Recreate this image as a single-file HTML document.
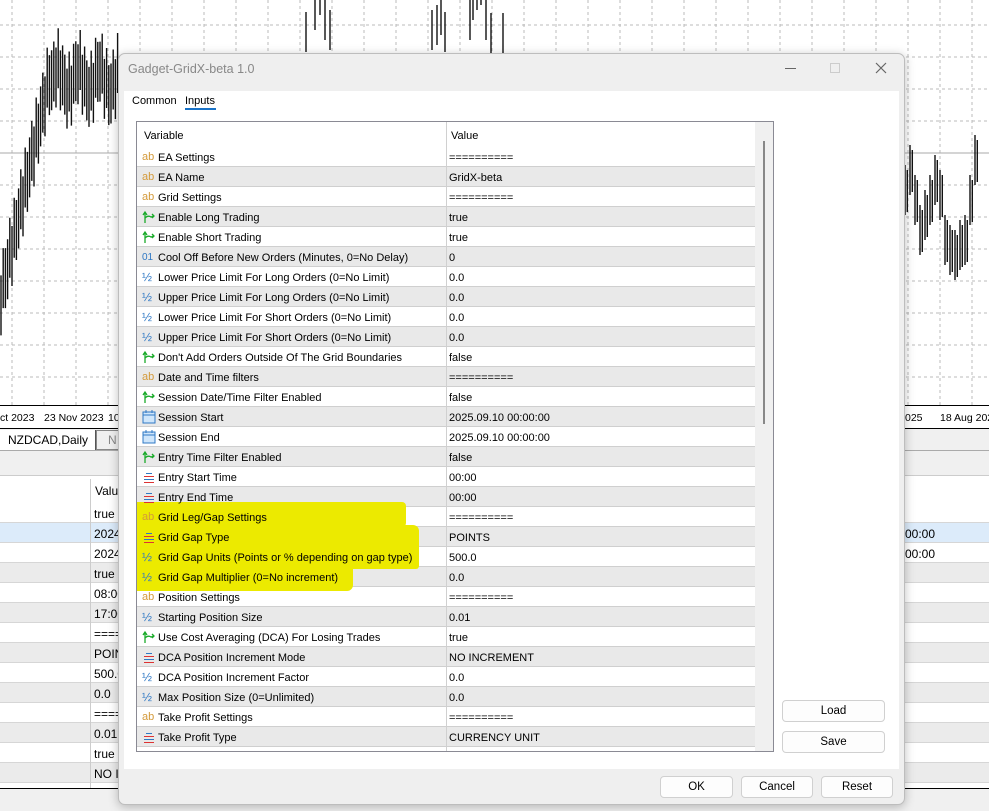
<!DOCTYPE html>
<html><head><meta charset="utf-8">
<style>
*{margin:0;padding:0;box-sizing:border-box}
body{width:989px;height:811px;overflow:hidden;position:relative;background:#fff;font-family:"Liberation Sans",Tahoma,sans-serif;font-size:11px;color:#000}
.a{position:absolute}
.t{position:absolute;white-space:nowrap;line-height:20px}
.btn{position:absolute;background:#fdfdfd;border:1px solid #d0d0d0;border-radius:4px;text-align:center;line-height:21px;font-size:11.5px}
.ic{position:absolute;width:14px;height:20px;font-size:11px;line-height:21px}
</style></head><body>
<svg class="a" style="left:0;top:0" width="989" height="811" id="ch"></svg>
<div class="a" style="left:0;top:405px;width:989px;height:1px;background:#000"></div>
<div class="t" style="left:0;top:408px;font-size:10.5px">ct 2023</div>
<div class="t" style="left:44px;top:408px;font-size:10.5px">23 Nov 2023</div>
<div class="t" style="left:108px;top:408px;font-size:10.5px">10</div>
<div class="t" style="left:905px;top:408px;font-size:10.5px">025</div>
<div class="t" style="left:940px;top:408px;font-size:10.5px">18 Aug 2025</div>
<div class="a" style="left:0;top:428px;width:989px;height:22px;background:#f0f0f0;border-top:1px solid #000"></div>
<div class="a" style="left:-2px;top:430px;width:98px;height:21px;background:#fff;border:1px solid #555;border-top:none"></div>
<div class="t" style="left:8px;top:430px;font-size:12px">NZDCAD,Daily</div>
<div class="a" style="left:96px;top:430px;width:30px;height:20px;background:#f0f0f0;border:1px solid #888"></div>
<div class="t" style="left:108px;top:430px;font-size:12px;color:#888">N</div>
<div class="a" style="left:0;top:450px;width:989px;height:26px;background:#f0f0f0;border-top:1px solid #aaa;border-bottom:1px solid #ccc"></div>
<div id="bg"></div>
<div class="a" style="left:0;top:788px;width:989px;height:1px;background:#000"></div>
<div class="a" style="left:0;top:789px;width:989px;height:22px;background:#f0f0f0"></div>
<div class="a" style="left:118px;top:53px;width:787px;height:752px;background:#efefef;border:1px solid #bdbdbd;border-radius:7px;box-shadow:0 2px 10px rgba(0,0,0,.25)"></div>
<div class="t" style="left:128px;top:59px;font-size:12.5px;color:#888">Gadget-GridX-beta 1.0</div>
<div class="a" style="left:785px;top:68px;width:11px;height:1px;background:#666"></div>
<div class="a" style="left:830px;top:63px;width:10px;height:10px;border:1px solid #ccc"></div>
<svg class="a" style="left:875px;top:62px" width="12" height="12"><path d="M1 1L11 11M11 1L1 11" stroke="#666" stroke-width="1.2"/></svg>
<div class="a" style="left:124px;top:91px;width:775px;height:678px;background:#fff"></div>
<div class="t" style="left:132px;top:91px">Common</div>
<div class="t" style="left:185px;top:91px">Inputs</div>
<div class="a" style="left:185px;top:108px;width:31px;height:2px;background:#1a73c8"></div>
<div class="a" style="left:136px;top:121px;width:638px;height:631px;border:1px solid #8a8a94;background:#fff;overflow:hidden" id="tb"></div>
<div class="btn" style="left:782px;top:700px;width:103px;height:22px">Load</div>
<div class="btn" style="left:782px;top:731px;width:103px;height:22px">Save</div>
<div class="btn" style="left:660px;top:776px;width:73px;height:22px">OK</div>
<div class="btn" style="left:741px;top:776px;width:72px;height:22px">Cancel</div>
<div class="btn" style="left:821px;top:776px;width:72px;height:22px">Reset</div>
<script>
var s='';
for(var x=12;x<989;x+=32)s+='<line x1="'+x+'" y1="0" x2="'+x+'" y2="405" stroke="#bbb" stroke-dasharray="3,3"/>';
for(var y=25;y<405;y+=32)s+='<line x1="0" y1="'+y+'" x2="989" y2="'+y+'" stroke="#bbb" stroke-dasharray="3,3"/>';
s+='<line x1="0" y1="153" x2="989" y2="153" stroke="#aaa"/>';
function f(x){if(x<50)return 300-x*4.5;return 80+Math.sin(x*0.3)*12;}
var p='';
for(var x=1;x<118;x+=2.2){var m=f(x)+Math.sin(x*1.7)*10;p+='M'+x.toFixed(1)+' '+(m-30)+'V'+(m+30);}
var r=[[905,190],[910,170],[915,200],[920,230],[925,215],[930,200],[935,180],[940,195],[945,240],[950,250],[955,255],[960,245],[965,240],[970,200],[975,160]];
for(var i=0;i<r.length;i++){var x=r[i][0],m=r[i][1];for(var k=0;k<2;k++)p+='M'+(x+k*2.3)+' '+(m-25+k*5)+'V'+(m+25-k*3);}
var tp=[[306,52],[315,30],[320,15],[325,40],[330,50],[432,50],[437,45],[441,35],[445,52],[470,40],[473,20],[477,10],[481,5],[486,40],[491,53],[503,53]];
for(var i=0;i<tp.length;i++)p+='M'+tp[i][0]+' '+(tp[i][1]-40)+'V'+tp[i][1];
s+='<path d="'+p+'" stroke="#111" stroke-width="1.4" fill="none"/>';
document.getElementById('ch').innerHTML=s;
var b='';
b+='<div class="a" style="left:90px;top:479px;width:1px;height:309px;background:#ccc"></div>';
b+='<div class="t" style="left:95px;top:481px;font-size:12px">Valu</div>';
var lv=['true','2024','2024','true','08:00','17:00','====','POIN','500.0','0.0','====','0.01','true','NO I'];
for(var i=0;i<14;i++){var y=503+20*i;var c=i==1?'#dcebfa':(i%2==1?'#ebebeb':'#fff');
b+='<div class="a" style="left:0;top:'+y+'px;width:118px;height:20px;background:'+c+';border-bottom:1px solid #d6d6d6"></div>';
b+='<div class="a" style="left:904px;top:'+y+'px;width:85px;height:20px;background:'+c+';border-bottom:1px solid #d6d6d6"></div>';
b+='<div class="a" style="left:90px;top:'+y+'px;width:1px;height:20px;background:#ccc"></div>';
b+='<div class="t" style="left:94px;top:'+(y+1)+'px;font-size:12px">'+lv[i]+'</div>';}
b+='<div class="t" style="left:905px;top:524px;font-size:12px">00:00</div><div class="t" style="left:905px;top:544px;font-size:12px">00:00</div>';
document.getElementById('bg').innerHTML=b;
var I={ab:'<span style="color:#d49a3a;font-size:11px">ab</span>',
ar:'<svg width="14" height="14" style="margin-top:3px"><path d="M3 13V3M1 5L3 2L5 5M3 8Q6 5 9 7L12 6M10 4L12 6L10 8" stroke="#1aaa2a" stroke-width="1.3" fill="none"/></svg>',
h:'<span style="color:#2f78c4;font-size:12px">½</span>',
o:'<span style="color:#2f78c4;font-size:10px">01</span>',
e:'<svg width="14" height="14" style="margin-top:4px"><path d="M4 2.5H10" stroke="#2f78c4" stroke-width="1"/><path d="M2 5.5H12" stroke="#d33" stroke-width="1"/><path d="M2 8.5H12" stroke="#2f78c4" stroke-width="1"/><path d="M2 11.5H12" stroke="#d33" stroke-width="1"/></svg>',
c:'<svg width="14" height="14" style="margin-top:3px"><rect x="1" y="2" width="12" height="11" fill="#cfe6fb" stroke="#2f78c4"/><path d="M1 5H13M4 0V3M10 0V3" stroke="#2f78c4"/></svg>'};
var R=[['ab','EA Settings','=========='],['ab','EA Name','GridX-beta'],['ab','Grid Settings','=========='],['ar','Enable Long Trading','true'],['ar','Enable Short Trading','true'],['o','Cool Off Before New Orders (Minutes, 0=No Delay)','0'],['h','Lower Price Limit For Long Orders (0=No Limit)','0.0'],['h','Upper Price Limit For Long Orders (0=No Limit)','0.0'],['h','Lower Price Limit For Short Orders (0=No Limit)','0.0'],['h','Upper Price Limit For Short Orders (0=No Limit)','0.0'],['ar',"Don't Add Orders Outside Of The Grid Boundaries",'false'],['ab','Date and Time filters','=========='],['ar','Session Date/Time Filter Enabled','false'],['c','Session Start','2025.09.10 00:00:00'],['c','Session End','2025.09.10 00:00:00'],['ar','Entry Time Filter Enabled','false'],['e','Entry Start Time','00:00'],['e','Entry End Time','00:00'],['ab','Grid Leg/Gap Settings','=========='],['e','Grid Gap Type','POINTS'],['h','Grid Gap Units (Points or % depending on gap type)','500.0'],['h','Grid Gap Multiplier (0=No increment)','0.0'],['ab','Position Settings','=========='],['h','Starting Position Size','0.01'],['ar','Use Cost Averaging (DCA) For Losing Trades','true'],['e','DCA Position Increment Mode','NO INCREMENT'],['h','DCA Position Increment Factor','0.0'],['h','Max Position Size (0=Unlimited)','0.0'],['ab','Take Profit Settings','=========='],['e','Take Profit Type','CURRENCY UNIT'],['h','','']];
var t='<div class="t" style="left:7px;top:4px">Variable</div><div class="t" style="left:314px;top:4px">Value</div>';
for(var i=0;i<R.length;i++){var y=25+20*i;var c=i%2?'#e9e9e9':'#fff';
t+='<div class="a" style="left:0;top:'+y+'px;width:618px;height:20px;background:'+c+';border-bottom:1px solid #cfcfcf"></div>';}
t+='<div class="a" style="left:-10px;top:380px;width:279px;height:25px;background:#ecea00;border-radius:4px"></div>';
t+='<div class="a" style="left:-10px;top:403px;width:292px;height:44px;background:#ecea00;border-radius:3px 6px 3px 3px"></div>';
t+='<div class="a" style="left:-10px;top:445px;width:226px;height:24px;background:#ecea00;border-radius:0 0 6px 3px"></div>';
t+='<div class="a" style="left:309px;top:0;width:1px;height:631px;background:#d0d0d0"></div>';
for(var i=0;i<R.length;i++){var y=25+20*i;
t+='<div class="ic" style="left:5px;top:'+y+'px">'+I[R[i][0]]+'</div>';
t+='<div class="t" style="left:21px;top:'+(y+1)+'px">'+R[i][1]+'</div><div class="t" style="left:312px;top:'+(y+1)+'px">'+R[i][2]+'</div>';}
t+='<div class="a" style="left:618px;top:0;width:19px;height:631px;background:#f0f0f0"></div><div class="a" style="left:626px;top:19px;width:2px;height:283px;background:#888"></div>';
document.getElementById('tb').innerHTML=t;
</script>
</body></html>
